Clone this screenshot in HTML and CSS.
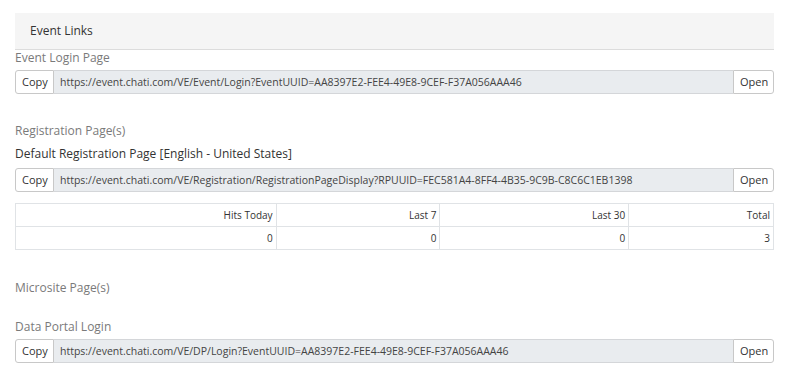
FILE: index.html
```html
<!DOCTYPE html>
<html>
<head>
<meta charset="utf-8">
<link rel="stylesheet" href="styles.css">
</head>
<body>
<div class="panel">
  <div class="panel-heading">Event Links</div>

  <div class="label first">Event Login Page</div>
  <div class="input-group">
    <button class="btn btn-left">Copy</button>
    <div class="field">https://event.chati.com/VE/Event/Login?EventUUID=AA8397E2-FEE4-49E8-9CEF-F37A056AAA46</div>
    <button class="btn btn-right">Open</button>
  </div>

  <div class="label section">Registration Page(s)</div>
  <div class="sublabel">Default Registration Page [English - United States]</div>
  <div class="input-group">
    <button class="btn btn-left">Copy</button>
    <div class="field">https://event.chati.com/VE/Registration/RegistrationPageDisplay?RPUUID=FEC581A4-8FF4-4B35-9C9B-C8C6C1EB1398</div>
    <button class="btn btn-right">Open</button>
  </div>

  <table class="stats">
    <tr><th class="c1">Hits Today</th><th class="c2">Last 7</th><th class="c3">Last 30</th><th class="c4">Total</th></tr>
    <tr><td>0</td><td>0</td><td>0</td><td>3</td></tr>
  </table>

  <div class="label micro">Microsite Page(s)</div>

  <div class="label portal">Data Portal Login</div>
  <div class="input-group">
    <button class="btn btn-left">Copy</button>
    <div class="field">https://event.chati.com/VE/DP/Login?EventUUID=AA8397E2-FEE4-49E8-9CEF-F37A056AAA46</div>
    <button class="btn btn-right">Open</button>
  </div>
</div>
</body>
</html>
```

FILE: styles.css
```css
* { box-sizing: border-box; }
body {
  margin: 0;
  padding: 13px 18px 0 15px;
  font-family: "Open Sans", "Noto Sans", sans-serif;
  color: #333;
  background: #fff;
}
.panel { width: 759px; }
.panel-heading {
  height: 37px;
  background: #f5f5f5;
  border-bottom: 1px solid #dcdcdc;
  padding: 9px 15px 0;
  font-size: 12px;
  line-height: 18px;
  color: #333;
}
.label {
  font-size: 12px;
  line-height: 16px;
  color: #7a7a7a;
}
.label.first { margin-top: 0; }
.label.section { margin-top: 29px; }
.label.micro { margin-top: 30px; }
.label.portal { margin-top: 23px; }
.sublabel {
  font-size: 12px;
  line-height: 16px;
  color: #333;
  margin-top: 7px;
}
.input-group {
  display: flex;
  height: 24px;
  margin-top: 4px;
}
.sublabel + .input-group { margin-top: 6px; }
.portal + .input-group { margin-top: 4px; }
.btn {
  font-family: inherit;
  font-size: 11px;
  color: #333;
  background: #fff;
  border: 1px solid #c8c8c8;
  padding: 0 6px;
  height: 24px;
  line-height: 22px;
  margin: 0;
}
.btn-left { width: 39px; border-radius: 3px 0 0 3px; }
.btn-right { width: 41px; border-radius: 0 3px 3px 0; }
.field {
  flex: 1;
  background: #e9ecef;
  border-top: 1px solid #d4d6d9;
  border-bottom: 1px solid #d4d6d9;
  font-size: 10.5px;
  line-height: 22px;
  padding: 0 6px;
  color: #444;
  white-space: nowrap;
  overflow: hidden;
}
.stats {
  width: 759px;
  border-collapse: collapse;
  margin-top: 11px;
  font-size: 10px;
  color: #333;
}
.stats th, .stats td {
  border: 1px solid #e0e3e6;
  text-align: right;
  font-weight: normal;
  height: 23px;
  padding: 0 3px;
}
.stats .c1 { width: 261px; }
.stats .c2 { width: 164px; }
.stats .c3 { width: 189px; }
.stats .c4 { width: 145px; }
```
